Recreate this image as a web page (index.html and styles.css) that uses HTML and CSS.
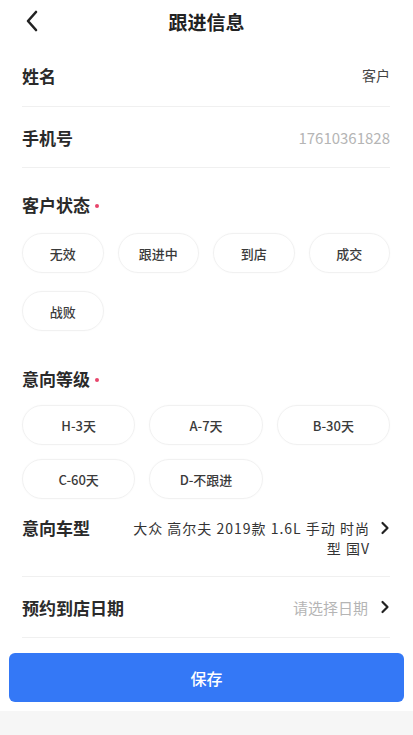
FILE: index.html
```html
<!DOCTYPE html>
<html lang="zh-CN">
<head>
<meta charset="utf-8">
<title>跟进信息</title>
<link rel="stylesheet" href="styles.css">
</head>
<body>
<div class="page">
  <header class="nav">
    <span class="back">
      <svg width="14" height="22" viewBox="0 0 14 22"><path d="M11 2 L3 11 L11 20" fill="none" stroke="#222" stroke-width="2.6" stroke-linecap="round" stroke-linejoin="round"/></svg>
    </span>
    <h1 class="title">跟进信息</h1>
  </header>

  <main class="form">
    <div class="row">
      <span class="label">姓名</span>
      <span class="value">客户</span>
    </div>
    <div class="row">
      <span class="label">手机号</span>
      <span class="value muted">17610361828</span>
    </div>

    <section class="group">
      <div class="group-title">客户状态<i class="req"></i></div>
      <div class="chips chips-4">
        <span class="chip">无效</span>
        <span class="chip">跟进中</span>
        <span class="chip">到店</span>
        <span class="chip">成交</span>
        <span class="chip">战败</span>
      </div>
    </section>

    <section class="group group-level">
      <div class="group-title">意向等级<i class="req"></i></div>
      <div class="chips chips-3">
        <span class="chip">H-3天</span>
        <span class="chip">A-7天</span>
        <span class="chip">B-30天</span>
        <span class="chip">C-60天</span>
        <span class="chip">D-不跟进</span>
      </div>
    </section>

    <div class="row row-car">
      <span class="label">意向车型</span>
      <span class="car-value">大众 高尔夫 2019款 1.6L 手动 时尚型 国V</span>
      <svg class="arrow" width="10" height="14" viewBox="0 0 10 14"><path d="M2.5 2 L7.5 7 L2.5 12" fill="none" stroke="#222" stroke-width="2.2" stroke-linecap="round" stroke-linejoin="round"/></svg>
    </div>
    <div class="row">
      <span class="label">预约到店日期</span>
      <span class="value-link">
        <span class="muted">请选择日期</span>
        <svg class="arrow" width="10" height="14" viewBox="0 0 10 14"><path d="M2.5 2 L7.5 7 L2.5 12" fill="none" stroke="#222" stroke-width="2.2" stroke-linecap="round" stroke-linejoin="round"/></svg>
      </span>
    </div>
  </main>

  <div class="footer">
    <button class="save">保存</button>
  </div>
  <div class="bottom"></div>
</div>
</body>
</html>
```

FILE: styles.css
```css
* { box-sizing: border-box; }
html, body {
  margin: 0;
  padding: 0;
  background: #fff;
  font-family: "Noto Sans CJK SC", "Noto Sans", sans-serif;
  color: #222;
}
.page {
  width: 413px;
  min-height: 735px;
  display: flex;
  flex-direction: column;
  background: #fff;
}
.nav {
  height: 44px;
  display: flex;
  align-items: center;
  justify-content: center;
  position: relative;
}
.back {
  position: absolute;
  left: 25px;
  top: 10px;
  display: flex;
}
.title {
  margin: 0;
  font-size: 19px;
  font-weight: 700;
  color: #222;
  line-height: 42px;
}
.form {
  padding: 0 23px 0 22px;
  display: flex;
  flex-direction: column;
}
.row {
  height: 61px;
  display: flex;
  align-items: center;
  justify-content: space-between;
  border-bottom: 1px solid #f0f0f0;
}
.row:first-child { height: 63px; }
.label {
  font-size: 17px;
  font-weight: 700;
  color: #2a2a2a;
}
.value {
  font-size: 14px;
  color: #444;
}
.muted {
  color: #b5b5b5;
  font-size: 15px;
}
.group {
  padding-top: 27px;
}
.group-title {
  font-size: 17px;
  font-weight: 700;
  color: #2a2a2a;
  line-height: 20px;
  display: flex;
  align-items: center;
}
.req {
  width: 4px;
  height: 4px;
  border-radius: 50%;
  background: #e8456b;
  margin-left: 5px;
  margin-top: 2px;
}
.chips {
  display: grid;
  column-gap: 14px;
  row-gap: 18px;
  margin-top: 18px;
}
.chips-4 { grid-template-columns: repeat(4, 1fr); }
.chips-3 { grid-template-columns: repeat(3, 1fr); row-gap: 14px; margin-top: 16px; }
.group-level { padding-top: 38px; }
.chip {
  height: 40px;
  border: 1px solid #f1f1f1;
  border-radius: 20px;
  display: flex;
  align-items: center;
  justify-content: center;
  font-size: 13px;
  font-weight: 500;
  color: #3a3a3a;
  box-shadow: 0 0 2px rgba(0,0,0,0.03);
}
.row-car {
  height: auto;
  align-items: flex-start;
  padding: 19px 0 18px;
}
.row-car .label { line-height: 20px; }
.car-value {
  width: 248px;
  margin-left: auto;
  text-align: right;
  font-size: 14px;
  line-height: 20px;
  letter-spacing: 1px;
  color: #333;
}
.row-car .arrow {
  margin-left: 10px;
  margin-top: 3px;
  flex: none;
}
.value-link {
  display: flex;
  align-items: center;
  gap: 12px;
}
.footer {
  padding: 15px 9px 9px;
  background: #fff;
}
.save {
  width: 100%;
  height: 49px;
  border: none;
  border-radius: 6px;
  background: #3478f6;
  color: #fff;
  font-family: "Noto Sans CJK SC", "Noto Sans", sans-serif;
  font-size: 16px;
  font-weight: 500;
}
.bottom {
  flex: 1;
  background: #f6f6f6;
}
```
